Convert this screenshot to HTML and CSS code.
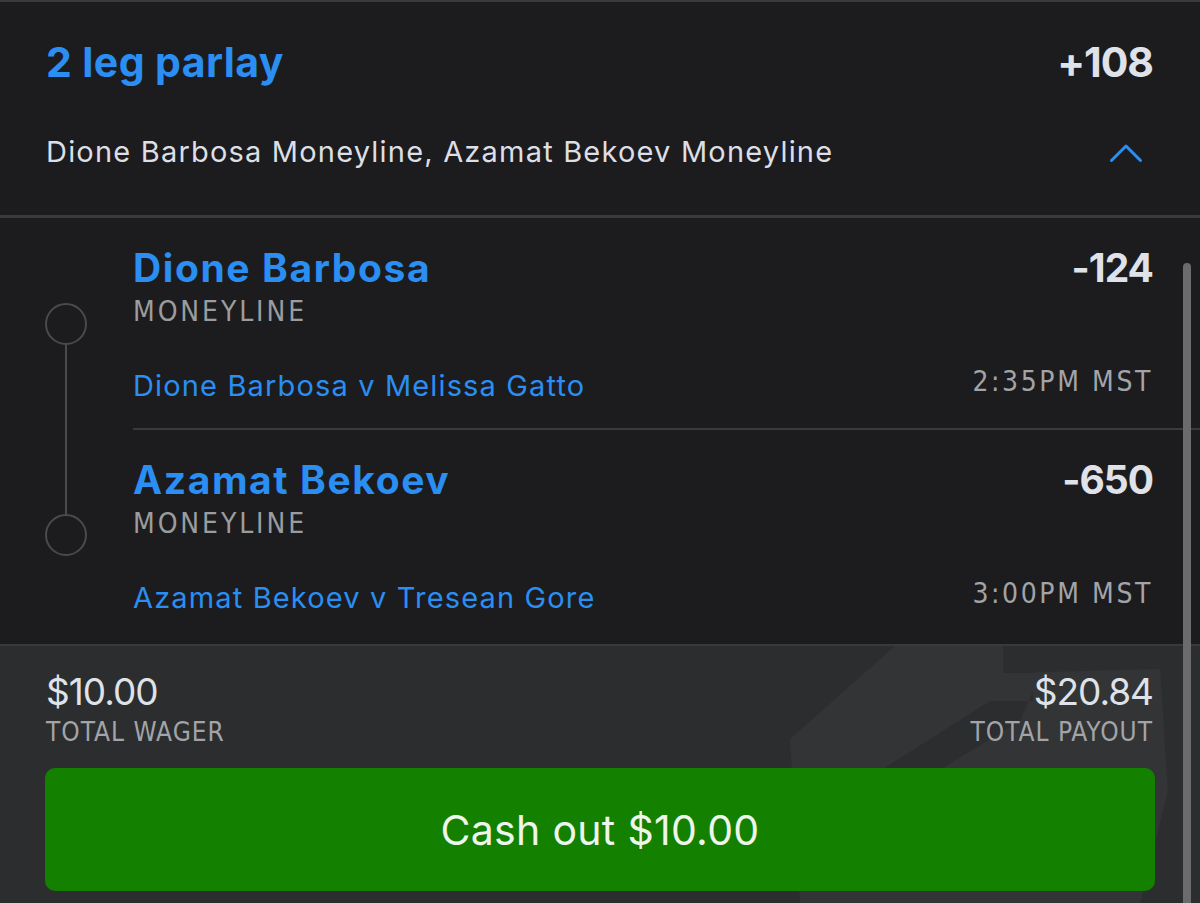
FILE: index.html
```html
<!DOCTYPE html>
<html lang="en">
<head>
<meta charset="utf-8">
<title>2 leg parlay</title>
<link rel="stylesheet" href="styles.css">
</head>
<body>
<div class="app">
  <div class="top-rule"></div>
  <header class="head">
    <div class="title-row">
      <h1 class="parlay">2 leg parlay</h1>
      <span class="odds">+108</span>
    </div>
    <div class="sub-row">
      <span class="summary">Dione Barbosa Moneyline, Azamat Bekoev Moneyline</span>
      <svg class="chevron" width="34" height="20" viewBox="0 0 34 20" aria-hidden="true">
        <path d="M2.5 17.5 L17 3 L31.5 17.5" fill="none" stroke="#2a8ef2" stroke-width="3" stroke-linecap="round" stroke-linejoin="round"/>
      </svg>
    </div>
  </header>

  <section class="legs">
    <div class="rail">
      <span class="node"></span>
      <span class="wire"></span>
      <span class="node"></span>
    </div>
    <div class="leg-list">
      <div class="leg">
        <div class="leg-top">
          <span class="leg-name">Dione Barbosa</span>
          <span class="leg-odds">-124</span>
        </div>
        <div class="market">MONEYLINE</div>
        <div class="leg-bottom">
          <span class="matchup">Dione Barbosa v Melissa Gatto</span>
          <span class="time">2:35PM MST</span>
        </div>
      </div>
      <div class="leg leg-last">
        <div class="leg-top">
          <span class="leg-name">Azamat Bekoev</span>
          <span class="leg-odds">-650</span>
        </div>
        <div class="market">MONEYLINE</div>
        <div class="leg-bottom">
          <span class="matchup">Azamat Bekoev v Tresean Gore</span>
          <span class="time">3:00PM MST</span>
        </div>
      </div>
    </div>
  </section>

  <footer class="foot">
    <svg class="watermark" width="420" height="258" viewBox="0 0 420 258" aria-hidden="true">
      <path d="M10 93 L115 0 L223 0 L223 27 L380 23 L388 145 L360 258 L20 258 Z" fill="#333436"/>
      <path d="M100 125 L210 55 L253 55 L253 27 L223 27 L223 0 L253 0 L253 45 L240 75 L120 148 Z" fill="#2c2d2f"/>
    </svg>
    <div class="totals">
      <div class="total">
        <span class="amount">$10.00</span>
        <span class="caption">TOTAL WAGER</span>
      </div>
      <div class="total total-right">
        <span class="amount">$20.84</span>
        <span class="caption">TOTAL PAYOUT</span>
      </div>
    </div>
    <button class="cashout">Cash out $10.00</button>
  </footer>

  <div class="scrollbar"></div>
</div>
</body>
</html>
```

FILE: styles.css
```css
* { box-sizing: border-box; }

html, body {
  margin: 0;
  padding: 0;
  background: #1c1c1e;
}

body {
  font-family: Inter, "Noto Sans", sans-serif;
  color: #dfe2e8;
  overflow: hidden;
}

.app {
  position: relative;
  width: 1200px;
  height: 903px;
  overflow: hidden;
  display: flex;
  flex-direction: column;
  background: #1c1c1e;
}

.top-rule {
  height: 2px;
  background: #3a3a3c;
  flex: none;
}

/* header */
.head {
  padding: 35px 47px 45px 46px;
  border-bottom: 3px solid #3a3a3d;
  flex: none;
}

.title-row {
  display: flex;
  justify-content: space-between;
  align-items: center;
  height: 50px;
}

.parlay {
  margin: 0;
  font-size: 41px;
  line-height: 50px;
  font-weight: 700;
  color: #2a8ef2;
  letter-spacing: 0.4px;
}

.odds {
  font-size: 41px;
  line-height: 50px;
  font-weight: 700;
  color: #dfe2e8;
  letter-spacing: -1px;
}

.sub-row {
  margin-top: 47px;
  display: flex;
  justify-content: space-between;
  align-items: center;
  height: 36px;
}

.summary {
  font-size: 29px;
  line-height: 36px;
  color: #dcdfe5;
  letter-spacing: 1.2px;
}

.chevron {
  margin-right: 10px;
  margin-top: 1px;
}

/* legs */
.legs {
  display: flex;
  height: 426px;
  flex: none;
}

.rail {
  width: 133px;
  flex: none;
  padding: 85px 0 88px 45px;
  display: flex;
  flex-direction: column;
  align-items: flex-start;
}

.node {
  width: 42px;
  height: 42px;
  border: 2.5px solid #4a4a4d;
  border-radius: 50%;
  flex: none;
}

.wire {
  flex: 1;
  width: 2.5px;
  margin-left: 19.75px;
  background: #4a4a4d;
}

.leg-list {
  flex: 1;
  display: flex;
  flex-direction: column;
}

.leg {
  padding: 28px 47px 24px 0;
  border-bottom: 2px solid #3a3a3c;
}

.leg-last {
  border-bottom: none;
  padding-bottom: 26px;
}

.leg-top {
  display: flex;
  justify-content: space-between;
  align-items: center;
  height: 44px;
}

.leg-name {
  font-size: 39px;
  line-height: 44px;
  font-weight: 700;
  color: #2a8ef2;
  letter-spacing: 1.6px;
}

.leg-odds {
  font-size: 39px;
  line-height: 44px;
  font-weight: 700;
  color: #dfe2e8;
  letter-spacing: -1px;
}

.market {
  margin-top: 7px;
  font-family: "DejaVu Sans Condensed", "DejaVu Sans", sans-serif;
  font-size: 28px;
  line-height: 30px;
  letter-spacing: 2.9px;
  color: #9b9c9f;
}

.leg-bottom {
  margin-top: 41px;
  display: flex;
  justify-content: space-between;
  align-items: flex-start;
  height: 36px;
}

.matchup {
  font-size: 29px;
  line-height: 36px;
  color: #2a8ef2;
  letter-spacing: 1.15px;
}

.time {
  font-family: "DejaVu Sans Condensed", "DejaVu Sans", sans-serif;
  font-size: 28px;
  line-height: 27px;
  letter-spacing: 2.6px;
  color: #a2a4a8;
}

/* footer */
.foot {
  position: relative;
  flex: 1;
  background: #2c2d2f;
  border-top: 2px solid #3a3a3c;
  padding: 25px 45px 0 45px;
}

.watermark {
  position: absolute;
  left: 780px;
  top: 0;
  pointer-events: none;
}

.totals {
  position: relative;
  display: flex;
  justify-content: space-between;
  padding: 0 2px 0 1px;
}

.total {
  display: flex;
  flex-direction: column;
  align-items: flex-start;
}

.total-right {
  align-items: flex-end;
}

.amount {
  font-size: 37px;
  line-height: 42px;
  color: #dfe2e8;
  letter-spacing: -1px;
}

.caption {
  margin-top: 5px;
  font-family: "DejaVu Sans Condensed", "DejaVu Sans", sans-serif;
  font-size: 26px;
  line-height: 28px;
  letter-spacing: 1px;
  color: #a2a4a8;
}

.cashout {
  position: relative;
  display: flex;
  align-items: center;
  justify-content: center;
  width: 100%;
  height: 123px;
  margin-top: 22px;
  border: none;
  border-radius: 10px;
  background: #138000;
  color: #eef5ea;
  font-family: Inter, "Noto Sans", sans-serif;
  font-size: 41px;
  font-weight: 400;
  letter-spacing: 0.3px;
}

.scrollbar {
  position: absolute;
  left: 1183px;
  top: 263px;
  width: 8px;
  height: 660px;
  border-radius: 4px;
  background: #6b6b6e;
}
```
